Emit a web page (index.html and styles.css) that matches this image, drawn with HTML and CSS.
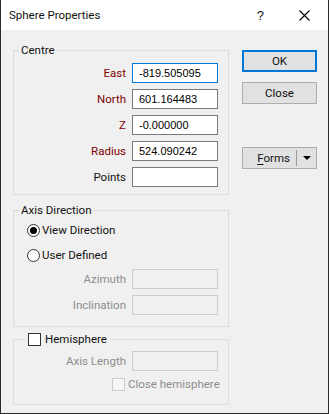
FILE: index.html
```html
<!DOCTYPE html>
<html>
<head>
<meta charset="utf-8">
<link rel="stylesheet" href="styles.css">
</head>
<body>
<div class="window">
  <div class="titlebar">
    <span class="title">Sphere Properties</span>
    <span class="help">?</span>
    <svg class="close-x" width="11" height="11" viewBox="0 0 11 11"><path d="M0.5 0.5 L10.5 10.5 M10.5 0.5 L0.5 10.5" stroke="#000" stroke-width="1.1" fill="none"/></svg>
  </div>
  <div class="body">
    <div class="groups">
      <fieldset class="group centre">
        <legend>Centre</legend>
        <div class="form">
          <label class="lbl key">East</label><input class="field focus" value="-819.505095">
          <label class="lbl key">North</label><input class="field" value="601.164483">
          <label class="lbl key">Z</label><input class="field" value="-0.000000">
          <label class="lbl key">Radius</label><input class="field" value="524.090242">
          <label class="lbl">Points</label><input class="field" value="">
        </div>
      </fieldset>
      <fieldset class="group axis">
        <legend>Axis Direction</legend>
        <div class="radio-row"><span class="radio checked"></span><span>View Direction</span></div>
        <div class="radio-row"><span class="radio"></span><span>User Defined</span></div>
        <div class="form dis">
          <label class="lbl off">Azimuth</label><input class="field disabled" disabled>
          <label class="lbl off">Inclination</label><input class="field disabled" disabled>
        </div>
      </fieldset>
      <fieldset class="group hemi">
        <legend><span class="check"></span><span>Hemisphere</span></legend>
        <div class="form dis">
          <label class="lbl off">Axis Length</label><input class="field disabled" disabled>
        </div>
        <div class="check-row"><span class="check disabled"></span><span class="off">Close hemisphere</span></div>
      </fieldset>
    </div>
    <div class="buttons">
      <div class="btn default">OK</div>
      <div class="btn">Close</div>
      <div class="btn split"><span class="split-label"><u>F</u>orms</span><span class="divider"></span><span class="arrow"></span></div>
    </div>
  </div>
</div>
</body>
</html>
```
FILE: styles.css
```css
html, body { margin: 0; padding: 0; background: #fff; }
body { font-family: Roboto, "Noto Sans", sans-serif; font-size: 11.5px; font-weight: 400; color: #111; }
.window {
  width: 329px; height: 414px; box-sizing: border-box;
  border: 1px solid #2b2b2b; border-top: none;
  background: #f0f0f0; display: flex; flex-direction: column;
}
.titlebar {
  height: 30px; background: #fff; display: flex; align-items: center;
  padding-left: 8px; flex: none;
}
.title { font-size: 11.5px; flex: 1; padding-bottom: 1px; }
.help { font-size: 13px; margin-right: 35px; font-family: "Liberation Sans", sans-serif; }
.close-x { margin-right: 18px; }
.body { display: flex; padding: 12px 11px 0 12px; gap: 13px; }
.groups { width: 216px; display: flex; flex-direction: column; }
.group {
  margin: 0; border: 1px solid #dcdcdc; padding: 0 9px 7px 0; min-width: 0;
}
.group legend { margin-left: 5px; padding: 0 2px; line-height: 16px; height: 16px; display: flex; align-items: center; white-space: nowrap; }
.centre .form { padding-top: 5px; }
.form {
  display: grid; grid-template-columns: 112px 86px; column-gap: 6px; row-gap: 6px;
  align-items: center;
}
.lbl { text-align: right; line-height: 16px; white-space: nowrap; }
.key { color: #800000; }
.off { color: #8d8d8d; }
.field {
  height: 20px; box-sizing: border-box; border: 1px solid #7a7a7a; background: #fff;
  font-family: "Liberation Sans", Arial, sans-serif; font-size: 11px; padding: 0 0 0 6px;
  margin: 0; width: 86px; outline: none; color: #000;
}
.field.focus { border-color: #0078d7; }
.field.disabled { border-color: #cccccc; background: #f0f0f0; }
.axis { margin-top: 7px; padding-bottom: 11px; }
.radio-row { display: flex; align-items: center; height: 20px; padding-left: 13px; gap: 2px; white-space: nowrap; }
.axis .radio-row:first-of-type { margin-top: 2px; }
.axis .radio-row + .radio-row { margin-top: 5px; }
.axis .form { margin-top: 4px; }
.radio {
  width: 13px; height: 13px; box-sizing: border-box; border: 1px solid #333; border-radius: 50%;
  background: #fff; display: flex; align-items: center; justify-content: center; flex: none;
}
.radio.checked::after { content: ""; width: 7px; height: 7px; border-radius: 50%; background: #000; }
.hemi { margin-top: 4px; padding-bottom: 10px; }
.hemi legend { margin-left: 12px; padding: 0 3px 0 2px; gap: 4px; }
.check {
  width: 13px; height: 13px; box-sizing: border-box; border: 1px solid #333; background: #fff; flex: none;
}
.check.disabled { border-color: #cccccc; background: #f6f6f6; }
.hemi .form { margin-top: 4px; }
.check-row { display: flex; align-items: center; gap: 3px; padding-left: 98px; height: 20px; margin-top: 3px; white-space: nowrap; }
.buttons { width: 75px; display: flex; flex-direction: column; padding-top: 8px; }
.btn {
  height: 22px; box-sizing: border-box; border: 1px solid #adadad; background: #e1e1e1;
  display: flex; align-items: center; justify-content: center; font-size: 11.5px;
}
.btn.default { border: 2px solid #0078d7; }
.btn + .btn { margin-top: 10px; }
.btn.split { margin-top: 43px; justify-content: flex-end; padding-right: 5px; }
.split-label u { text-decoration-thickness: 1px; text-underline-offset: 2px; }
.divider { width: 1px; height: 16px; background: #9a9a9a; margin: 0 6px 0 6px; }
.arrow { width: 0; height: 0; border-left: 4px solid transparent; border-right: 4px solid transparent; border-top: 4px solid #000; }
```
